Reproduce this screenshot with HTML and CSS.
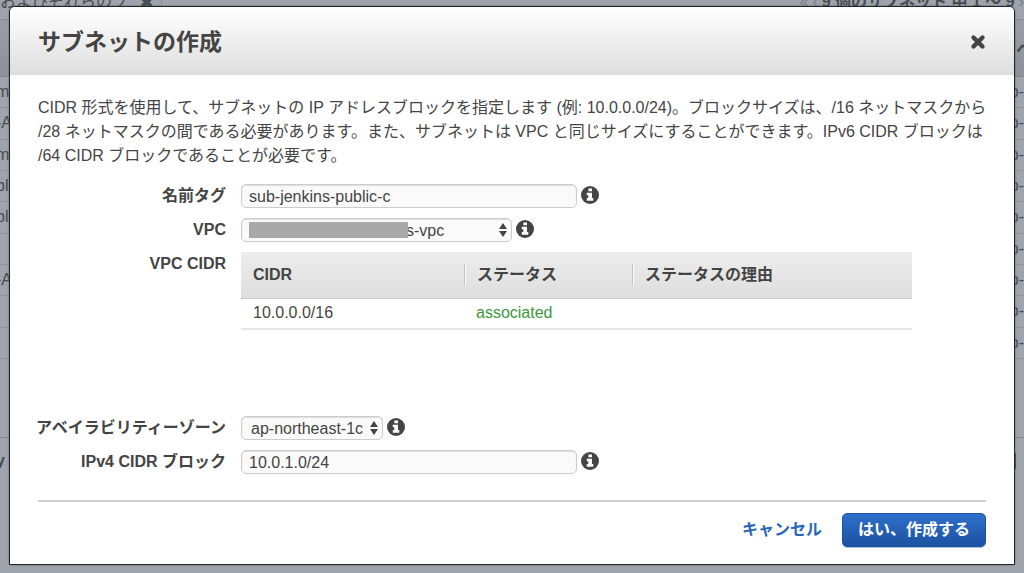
FILE: index.html
```html
<!DOCTYPE html>
<html lang="ja">
<head>
<meta charset="utf-8">
<meta name="viewport" content="width=device-width, initial-scale=1">
<title>サブネットの作成</title>
<link rel="stylesheet" href="styles.css">
</head>
<body>
<svg class="sprite" aria-hidden="true">
  <symbol id="info" viewBox="0 0 18 18">
    <circle cx="9" cy="9" r="9" fill="#444"/>
    <path fill="#fff" d="M7.400 2.400h3.600v2.900H7.400zM5.800 6.800H11v5.300h1.300v2.600H5.800v-2.600h1.500V9.300H5.800z"/>
  </symbol>
  <symbol id="updown" viewBox="0 0 8 14">
    <path fill="#444" d="M4 0l4 6H0zM4 14l4-6H0z"/>
  </symbol>
</svg>

<div class="backdrop" aria-hidden="true">
  <div class="toolbar">
    <span class="filter">およびそれらのプ<b class="clear">✖</b></span>
    <span class="pager"><i>«</i><i>‹</i><b>9 個のサブネット 中 1 〜 9</b><i>›</i></span>
  </div>
  <div class="list-head"><b>ヘ</b></div>
  <div class="list">
    <div class="line"><span>m</span><span>p-</span></div>
    <div class="line"><span>-A</span><span>p-</span></div>
    <div class="line"><span>m</span><span>p-</span></div>
    <div class="line"><span>bl</span><span>p-</span></div>
    <div class="line"><span>bl</span><span>p-</span></div>
    <div class="line"><span></span><span>p-</span></div>
    <div class="line"><span>-A</span><span>p-</span></div>
    <div class="line"><span></span><span>p-</span></div>
    <div class="line"><span></span><span>p-</span></div>
  </div>
  <div class="details"><b>y</b><span class="handle"></span></div>
</div>

<main class="dialog" role="dialog" aria-labelledby="title">
  <header class="head">
    <h1 id="title" class="title">サブネットの作成</h1>
    <button class="close" type="button" aria-label="閉じる">
      <svg width="16" height="16" viewBox="0 0 16 16"><path d="M3.500 3.500l9 9M12.500 3.500l-9 9" stroke="#444" stroke-width="4.400" stroke-linecap="round"/></svg>
    </button>
  </header>

  <form class="body">
    <p class="intro">CIDR 形式を使用して、サブネットの IP アドレスブロックを指定します (例: 10.0.0.0/24)。ブロックサイズは、/16 ネットマスクから<br>/28 ネットマスクの間である必要があります。また、サブネットは VPC と同じサイズにすることができます。IPv6 CIDR ブロックは<br>/64 CIDR ブロックであることが必要です。</p>

    <div class="fields">
      <label class="label" for="name">名前タグ</label>
      <div class="field">
        <input class="control wide" id="name" type="text" value="sub-jenkins-public-c">
        <svg class="info"><use href="#info"/></svg>
      </div>

      <label class="label" for="vpc">VPC</label>
      <div class="field">
        <div class="picker">
          <select class="control vpc" id="vpc"><option>s-vpc</option></select>
          <span class="mask"></span>
          <svg class="arrows"><use href="#updown"/></svg>
        </div>
        <svg class="info"><use href="#info"/></svg>
      </div>

      <span class="label" id="cidr-label">VPC CIDR</span>
      <div class="cidrs">
        <table class="table" aria-labelledby="cidr-label">
          <thead><tr><th class="c1"><span>CIDR</span></th><th class="c2"><span>ステータス</span></th><th><span>ステータスの理由</span></th></tr></thead>
          <tbody><tr><td>10.0.0.0/16</td><td class="ok">associated</td><td></td></tr></tbody>
        </table>
      </div>

      <label class="label" for="zone">アベイラビリティーゾーン</label>
      <div class="field">
        <div class="picker">
          <select class="control zone" id="zone"><option>ap-northeast-1c</option></select>
          <svg class="arrows"><use href="#updown"/></svg>
        </div>
        <svg class="info"><use href="#info"/></svg>
      </div>

      <label class="label" for="block">IPv4 CIDR ブロック</label>
      <div class="field">
        <input class="control wide" id="block" type="text" value="10.0.1.0/24">
        <svg class="info"><use href="#info"/></svg>
      </div>
    </div>

    <footer class="actions">
      <a class="cancel" href="#">キャンセル</a>
      <button class="submit" type="button">はい、作成する</button>
    </footer>
  </form>
</main>
</body>
</html>
```

FILE: styles.css
```css
* { box-sizing: border-box; }

body {
  margin: 0;
  padding: 6px 9px 8px;
  min-height: 100vh;
  position: relative;
  overflow: hidden;
  background: #9fa3ac;
  color: #444;
  font: 16px/24px "Liberation Sans", "Noto Sans CJK JP", sans-serif;
}

.sprite { position: absolute; width: 0; height: 0; }

/* Dimmed page behind the dialog */
.backdrop {
  position: absolute;
  inset: 0;
  overflow: hidden;
  color: #484b50;
}

.toolbar {
  display: flex;
  justify-content: space-between;
  height: 20px;
  border-bottom: 1px solid #8c9098;
  line-height: 4px;
  white-space: nowrap;
}

.filter {
  display: flex;
  gap: 12px;
  padding-right: 8px;
  border-right: 1px solid #8c9098;
}

.clear { line-height: 6px; }
.pager { display: flex; gap: 4px; }
.pager i { color: #787c84; font-style: normal; }

.list-head {
  display: flex;
  justify-content: flex-end;
  height: 57px;
  margin-right: -8px;
  border-top: 7px solid #989ca5;
  border-bottom: 1px solid #858991;
  background: linear-gradient(#999da5, #8c9098);
  line-height: 46px;
}

.list { display: grid; grid-template-rows: repeat(9, 1fr); height: 282px; }

.line {
  display: flex;
  justify-content: space-between;
  align-items: center;
  margin-left: -4px;
  border-bottom: 1px solid #90949c;
}

.details {
  display: flex;
  justify-content: space-between;
  align-items: center;
  height: 126px;
  margin-top: 78px;
  padding: 0 8px 80px 0;
  margin-left: -4px;
  border-top: 1px solid #858991;
}

.handle { width: 4px; height: 16px; background: #484b50; }

/* Dialog */
.dialog {
  position: relative;
  overflow: hidden;
  border: 1px solid #202225;
  border-radius: 6px 6px 0 0;
  background: #fff;
  box-shadow: 0 0 2px #55585e;
}

.head {
  display: flex;
  align-items: center;
  justify-content: space-between;
  height: 68px;
  padding: 2px 28px 0;
  background: linear-gradient(#fff, #dedede);
}

.title { margin: 0; font-size: 23px; line-height: 32px; }

.close {
  display: flex;
  padding: 0;
  border: 0;
  background: none;
}

.body { padding: 21px 28px 17px; }
.intro { margin: 0 0 16px; white-space: nowrap; }

@media (max-width: 1000px) {
  .intro { white-space: normal; }
}

.fields {
  display: grid;
  grid-template-columns: 188px 1fr;
  gap: 10px 15px;
}

.label {
  justify-self: end;
  font-weight: bold;
  white-space: nowrap;
}

.field { display: flex; gap: 4px; height: 24px; }
.info { width: 18px; height: 18px; margin-top: 2px; }

.control {
  display: block;
  height: 24px;
  margin: 0;
  padding: 1px 7px 0;
  border: 1px solid #ccc;
  border-radius: 5px;
  outline: 0;
  background: #fafafa;
  box-shadow: inset 0 1px 1px #ddd;
  color: #444;
  font: inherit;
  line-height: 22px;
  appearance: none;
}

.wide { width: 336px; }
.vpc { width: 271px; padding-left: 164px; }
.zone { width: 142px; padding-left: 9px; }

.picker { position: relative; }

.arrows {
  position: absolute;
  right: 5px;
  top: 5px;
  width: 8px;
  height: 14px;
  pointer-events: none;
}

.mask {
  position: absolute;
  left: 8px;
  top: 4px;
  width: 159px;
  height: 16px;
  background: #a9a9a9;
}

.cidrs { min-height: 154px; }

.table {
  width: 100%;
  max-width: 671px;
  border-collapse: collapse;
  table-layout: fixed;
}

.table th {
  height: 46px;
  padding: 0;
  border-bottom: 1px solid #c8c8c8;
  background: linear-gradient(#ededed, #dedede);
  text-align: left;
}

.table th span {
  display: block;
  padding-left: 12px;
  line-height: 22px;
}

.table th + th span { border-left: 1px solid #c4c4c4; box-shadow: inset 1px 0 #f8f8f8; }
.c1 { width: 223px; }
.c2 { width: 168px; }

.table td {
  height: 31px;
  padding: 0 12px;
  border-bottom: 2px solid #e6e6e6;
}

.table .ok { color: #3c963c; }

.actions {
  display: flex;
  justify-content: flex-end;
  align-items: center;
  gap: 20px;
  margin-top: 26px;
  padding-top: 11px;
  border-top: 2px solid #d0d0d0;
}

.cancel { color: #2a66b8; font-weight: bold; text-decoration: none; }

.submit {
  height: 34px;
  padding: 0 15px;
  border: 1px solid #1c4f9c;
  border-radius: 5px;
  background: linear-gradient(#2f6fcb, #1c52a2);
  box-shadow: 0 1px #a9c4ea;
  color: #fff;
  font: inherit;
  font-weight: bold;
}
```
